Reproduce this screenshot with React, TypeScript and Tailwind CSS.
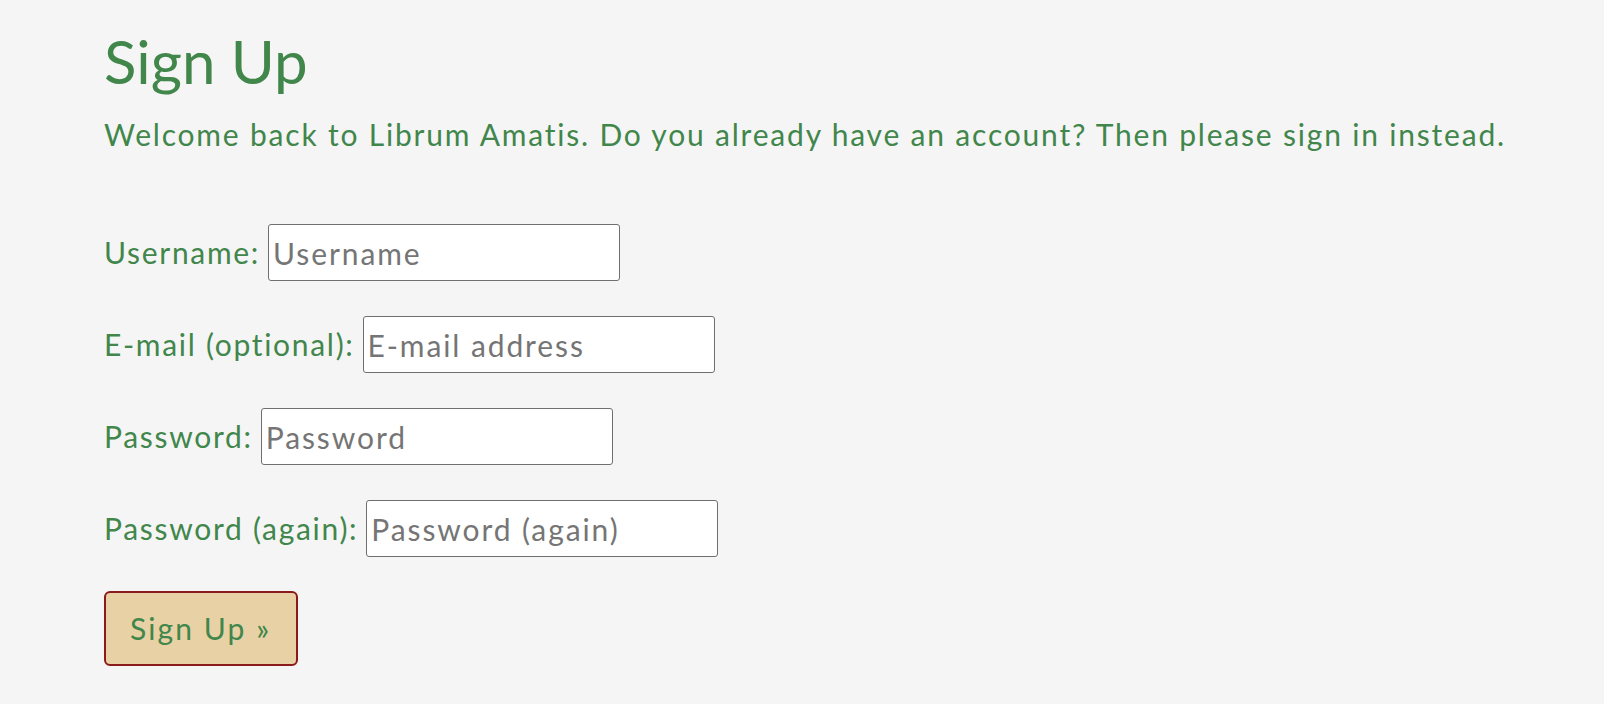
const fields = [
    { label: 'Username:', placeholder: 'Username', type: 'text' },
    { label: 'E-mail (optional):', placeholder: 'E-mail address', type: 'email' },
    { label: 'Password:', placeholder: 'Password', type: 'password' },
    { label: 'Password (again):', placeholder: 'Password (again)', type: 'password' },
];

const App = () => {
    return (
        <div className="min-h-screen bg-[#f5f5f5] font-['Lato',sans-serif] text-[#41864b]">
            <div className="pl-[104px] pt-[25px]">
                <h1 className="text-[60px] leading-[72px] font-normal">Sign Up</h1>
                <p className="mt-[15px] text-[30px] leading-[45px] tracking-[1.8px]">
                    Welcome back to Librum Amatis. Do you already have an account? Then please sign in instead.
                </p>

                <form className="mt-[67px] flex flex-col items-start gap-[35px]">
                    {fields.map((f) => (
                        <div key={f.label} className="flex items-center gap-[8px]">
                            <label className="text-[30px] leading-[45px] tracking-[1.7px]">{f.label}</label>
                            <input
                                type={f.type}
                                placeholder={f.placeholder}
                                className="w-[352px] h-[57px] bg-white border-[1.5px] border-[#6f6f6f] rounded-[3px] px-[4px] text-[30px] tracking-[1.9px] text-[#333] placeholder:text-[#757575] outline-none"
                            />
                        </div>
                    ))}
                    <button
                        type="button"
                        className="mt-[-1px] h-[75px] w-[194px] bg-[#e8d1a4] border-2 border-[#8b1a1a] rounded-[6px] text-[30px] tracking-[2.1px] whitespace-nowrap text-[#41864b] text-left px-[24px]"
                    >
                        Sign Up »
                    </button>
                </form>
            </div>
        </div>
    );
};

export default App;
